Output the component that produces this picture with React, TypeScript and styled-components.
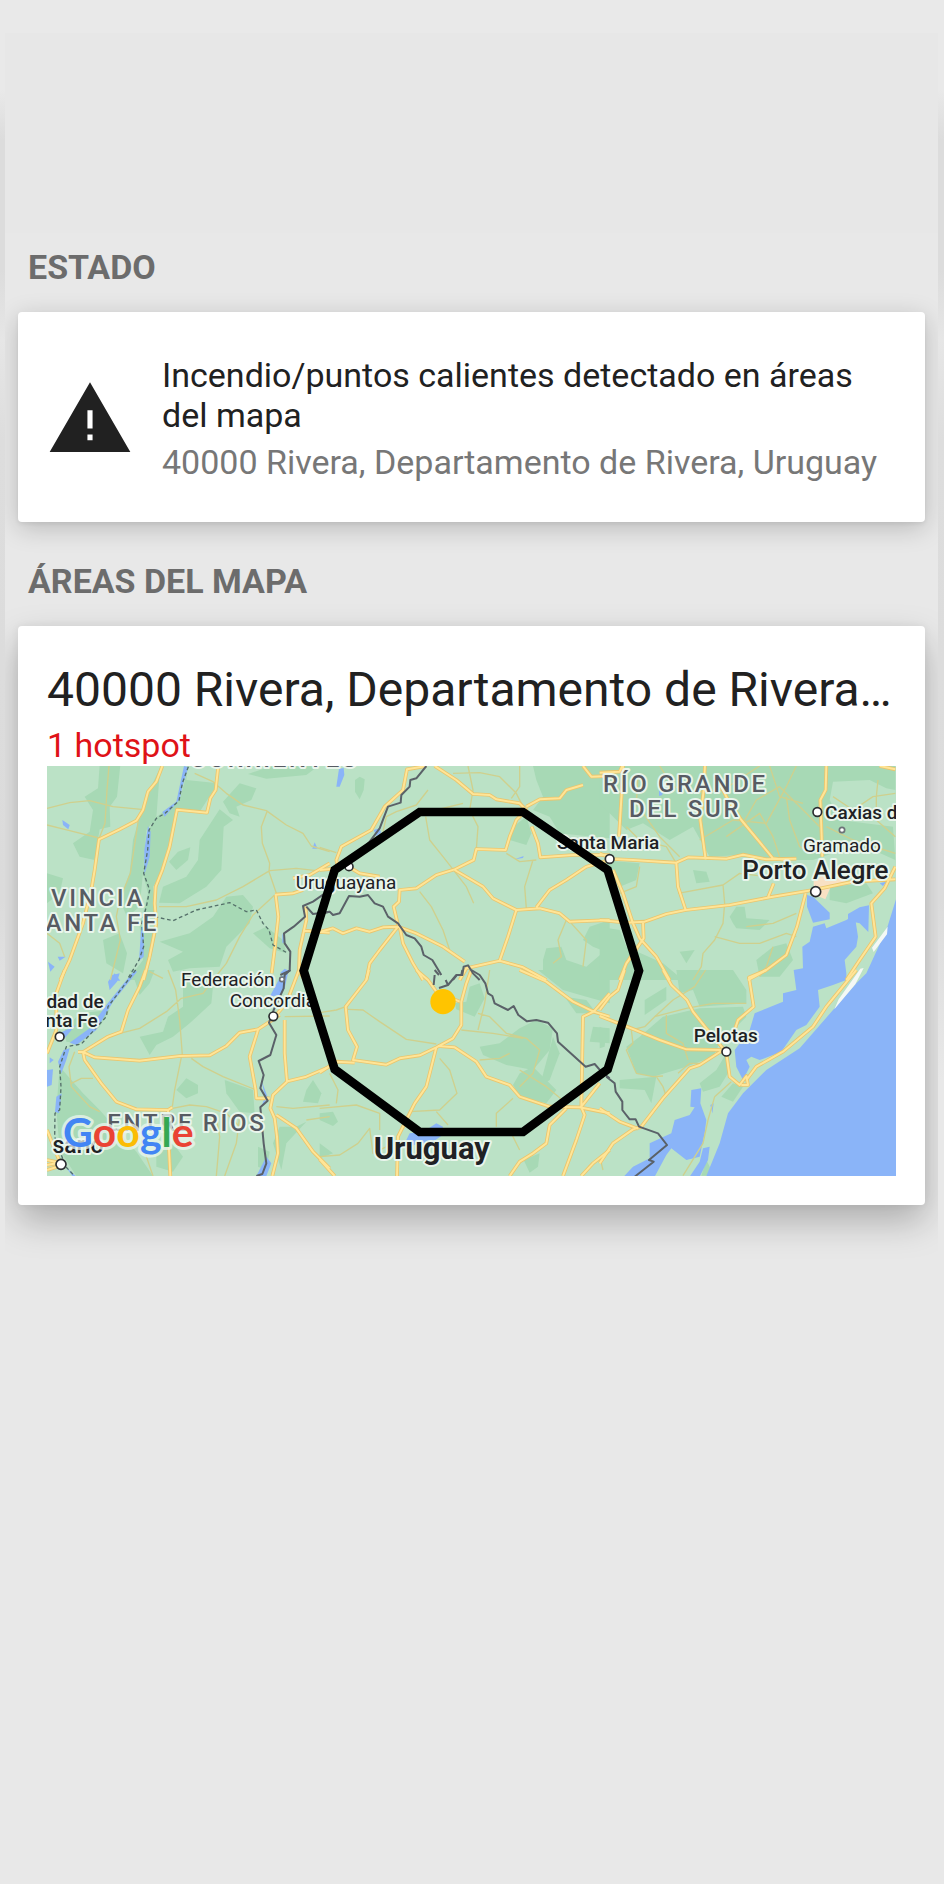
import React from 'react';
import styled, { createGlobalStyle } from 'styled-components';

const GlobalStyle = createGlobalStyle`
  * { box-sizing: border-box; }
  body {
    margin: 0;
    background: #e8e8e8;
    font-family: Roboto, "Liberation Sans", sans-serif;
  }
`;

const Page = styled.div`
  min-height: 100vh;
  padding: 33px 6px 0 5px;
  background:
    linear-gradient(#e9e9e9 90px, #dcdcdc 140px, #dcdcdc 270px, #e6e6e6 340px, #dddddd 440px, #dbdbdb 900px, #e8e8e8 1080px) left / 5px 100% no-repeat,
    linear-gradient(#e9e9e9 90px, #dcdcdc 140px, #dcdcdc 270px, #e6e6e6 340px, #dddddd 440px, #dbdbdb 900px, #e8e8e8 1080px) right / 6px 100% no-repeat,
    linear-gradient(#e9e9e9 33px, #e8e8e8 33px);
`;

const Panel = styled.main`
  overflow: hidden;
  min-height: calc(100vh - 33px);
  padding-bottom: 64px;
  background: #e8e8e8;
`;

const TopSpace = styled.div`
  height: 200px;
  background: #e7e7e7;
`;

const Section = styled.section<{ $spaced?: boolean }>`
  padding: ${(p) => (p.$spaced ? 39 : 14)}px 13px 0;
`;

const SectionTitle = styled.h2`
  margin: 0 0 25px;
  padding-left: 10px;
  font-size: 34px;
  line-height: 40px;
  font-weight: 700;
  color: #6c6c6c;
  text-transform: uppercase;
`;

const Card = styled.article<{ $raised?: boolean }>`
  border-radius: 4px;
  background: #fff;
  box-shadow: ${(p) =>
    p.$raised
      ? '0 16px 36px rgba(0, 0, 0, 0.26), 0 0 8px rgba(0, 0, 0, 0.06)'
      : '0 6px 26px rgba(0, 0, 0, 0.2), 0 2px 4px rgba(0, 0, 0, 0.06)'};
`;

const StatusCard = styled(Card)`
  display: flex;
  align-items: center;
  gap: 28px;
  padding: 43px 28px 40px;
`;

const WarningIcon = styled.svg`
  flex: none;
  width: 88px;
  height: 88px;
`;

const StatusText = styled.div`
  min-width: 0;
  font-size: 34px;
  line-height: 40px;
`;

const StatusTitle = styled.p`
  margin: 0 0 7px;
  color: #212121;
`;

const StatusPlace = styled.p`
  margin: 0;
  color: #777;
`;

const AreaCard = styled(Card)`
  padding: 36px 29px 29px;
`;

const AreaName = styled.h3`
  margin: 0;
  overflow: hidden;
  font-size: 48px;
  line-height: 56px;
  font-weight: 400;
  color: #212121;
  white-space: nowrap;
  text-overflow: ellipsis;
`;

const HotspotCount = styled.p`
  margin: 7px 0 1px;
  font-size: 34px;
  line-height: 40px;
  color: #df1218;
`;

const MapSvg = styled.svg`
  display: block;
  width: 100%;
  height: auto;
  background: #bbe2c6;
`;

const Label = styled.text<{ $size?: number; $weight?: number; $region?: boolean }>`
  font-size: ${(p) => p.$size ?? 57}px;
  font-weight: ${(p) => p.$weight ?? 500};
  fill: ${(p) => (p.$region ? '#575b63' : '#202124')};
  letter-spacing: ${(p) => (p.$region ? 8 : 0)}px;
  stroke: #e9f5ec;
  stroke-width: 12px;
  stroke-linejoin: round;
  paint-order: stroke;
`;

const Logo = styled.text`
  font-family: Lato, Roboto, sans-serif;
  font-size: 123px;
  font-weight: 700;
  stroke: rgba(235, 246, 238, 0.75);
  stroke-width: 18px;
  stroke-linejoin: round;
  paint-order: stroke;
`;

interface Tile {
  x: number;
  y: number;
  land: string[];
  water: string[];
  minor: string[];
  major: string[];
  border: string[];
  province?: string[];
}

const tiles: Tile[] = [
  {
    x: -22,
    y: -18,
    land: [
      'M180 15L242 15L232 110L210 140L212 200L180 208L165 300L120 290L100 250L150 215L160 150L135 110L175 85Z',
      'M362 15L448 15L420 120L345 175L322 220L310 340L325 400L300 500L310 600L265 660L318 660L350 520L340 380L372 330L395 240L410 150L480 155L535 70L440 60L445 15L365 15L330 90L300 170L280 240L270 340L240 420L262 470L300 440L310 340L320 210L350 172Z',
      'M540 148L580 180L552 200L545 330L500 380L420 430L358 428L370 380L440 350L475 300L480 240Z',
      'M388 305L415 275L452 262L445 300L410 330Z',
      'M550 125L600 70L650 85L635 120L590 140L600 170L570 160Z',
      'M625 42L690 20L840 15L800 45L680 56Z',
      'M360 545L450 520L520 470L560 410L610 405L640 440L630 490L560 560L540 620L450 625L400 635L385 600L430 575Z',
      'M640 520L680 500L730 540L740 580L690 565Z',
      'M190 540L240 520L262 580L250 640L200 610Z',
      'M22 340L70 355L60 400L22 430Z',
    ],
    water: [
      'M433 18L446 22L428 80L420 118L375 170L368 156L410 125Z',
      'M325 198L333 215L330 290L314 345L314 270Z',
      'M68 180L90 195L86 208L70 195Z',
      'M818 266L825 247L834 266Z',
      'M305 500L313 505L312 590L298 602Z',
      'M25 605L45 620L32 635Z',
      'M54 590L78 590L60 602Z',
      'M210 662L225 640L242 662Z',
      'M728 520L742 560L736 545L728 550Z',
      'M722 638L735 626L748 632L742 645Z',
    ],
    minor: [
      'M22 145L90 128L150 122L220 140L305 148',
      'M208 18L202 90L196 190L178 236',
      'M22 195L90 212L178 234',
      'M296 180L284 260L272 340L240 420L230 470L242 540L212 660',
      'M465 40L520 65L560 100L610 135L680 152L740 195L790 220L815 258L870 275',
      'M683 152L665 200L668 250L690 310L688 335L710 400',
      'M358 440L440 440L530 420L610 380L690 332L770 325L830 332',
      'M705 405L640 465L600 530L560 610L520 660',
      'M22 520L60 550L75 590',
      'M330 635L370 655',
    ],
    major: [
      'M368 18L350 65L325 95L310 150L290 182L240 208L178 238L165 330L155 390L130 490L90 600L62 660',
      'M536 18L528 90L512 115L502 158L412 149L390 260L368 330L348 380L345 430L350 490L330 590L312 660',
      'M870 310L810 345L760 355',
      'M706 404L760 400L790 390',
      'M708 405L716 470L706 560L696 640',
      'M798 440L800 480L780 570L778 630L795 660',
      'M795 512L870 518',
    ],
    border: [
      'M870 390L820 425L790 438L796 470L762 500L733 520L735 550L752 575L750 632L722 645',
      'M800 440L820 462L870 455',
    ],
    province: [
      'M446 20L428 70L418 122L376 160L350 175L328 210L324 270L312 340L330 390L320 440L306 490L312 560L298 600L265 655',
      'M345 470L400 482L470 450L570 428L620 455L650 450L670 490L688 510L700 555L745 580',
    ],
  },
  {
    x: -22,
    y: 612,
    land: [
      'M270 0L345 0L330 40L300 75L285 30Z',
      'M430 0L522 30L515 100L450 160L400 200L350 225L330 255L300 200L370 185L385 140L430 110Z',
      'M75 180L120 130L210 120L180 170L120 220L80 215Z',
      'M60 290L130 370L180 420L290 545L340 618L110 618L60 540L50 420Z',
      'M440 325L475 345L475 370L440 385L410 360Z',
      'M555 330L640 360L645 430L600 425L560 370Z',
      'M820 330L845 370L835 400L790 395L800 360Z',
      'M350 540L400 520L430 560L400 605L350 590Z',
      'M655 530L690 545L680 600L655 590Z',
      'M700 520L720 470L770 470L800 455L740 520L725 600Z',
    ],
    water: [
      'M218 15L240 10L232 35L210 60L205 35Z',
      'M285 0L292 5L220 95L170 180L110 225L90 218L150 175L200 105Z',
      'M72 240L90 235L80 270L65 310L55 275Z',
      'M22 300L40 298L36 345L22 350Z',
      'M50 380L66 370L58 430L46 425Z',
      'M30 262L42 270L30 280Z',
      'M60 190L110 165L100 175L75 205Z',
      'M78 590L108 618L98 618Z',
      'M722 20L745 10L735 55L722 75L690 80Z',
      'M665 330L685 385L665 410L676 380Z',
      'M680 560L695 580L680 618L650 618Z',
    ],
    minor: [
      'M385 0L408 60L420 150L428 255',
      'M240 190L300 175L380 125L425 85L490 70L520 30',
      'M425 262L405 360L398 410',
      'M455 265L490 290L550 320L650 360',
      'M105 245L88 290L95 350L150 410L180 425',
      'M95 340L125 325L160 325',
      'M398 415L450 405L500 410L560 430L600 470',
      'M530 445L540 500L530 618',
      'M710 410L760 415L870 405',
      'M870 440L800 450',
      'M735 140L870 138',
      'M300 500L340 618',
      'M600 440L590 520L555 618',
    ],
    major: [
      'M318 0L300 50L265 120L245 185L205 200L130 246L165 262L300 272L420 258L510 256L560 228L600 188L655 178L690 155L720 135',
      'M130 246L135 270L185 340L230 395L290 418L385 420L398 412',
      'M385 420L386 500L392 618',
      'M115 246L132 246',
      'M735 150L735 250L742 335L700 375L692 415L705 445L712 500L715 550L698 618',
      'M744 334L800 320L870 290',
      'M710 435L770 475L820 545L870 595',
      'M655 180L630 260L648 360L650 385L690 385',
      'M778 0L740 100L705 140',
      'M75 0L50 70L50 180L22 250',
      'M22 570L60 578L22 585M22 600L60 588M22 480L60 575',
    ],
    border: [
      'M752 0L735 15L732 55L702 120L688 158L710 195L692 255L657 273L672 315L662 355L684 392L662 412L672 520L680 580L668 612L650 618',
    ],
    province: ['M288 0L205 110L200 140L125 222L80 230L60 290L64 350L60 420L46 430L45 500L78 590L105 618'],
  },
  {
    x: 818,
    y: -18,
    land: [
      'M640 18L870 18L870 235L820 230L720 220L690 170L640 150L670 110L650 60Z',
      'M106 60L120 50L135 58L132 90L120 118L106 95Z',
      'M580 200L620 170L635 220L620 255L570 240Z',
      'M670 600L680 565L725 560L740 600L800 620L870 560L870 660L700 660L670 640Z',
      'M810 500L870 480L870 580L820 560L790 540Z',
    ],
    water: ['M58 26L72 24L74 45L60 80L50 80Z', 'M162 210L180 205L184 218L170 228Z', 'M585 298L612 288L610 294Z'],
    minor: [
      'M445 18L460 90L450 150L475 200L470 268',
      'M325 90L290 135L230 155L200 170L190 215',
      'M318 170L330 240L370 290L400 328',
      'M405 335L440 380L462 430',
      'M300 395L335 440L370 510L390 570',
      'M400 40L480 38L540 50L590 100L610 140',
      'M640 300L615 380L620 445',
      'M0 262L50 278',
      'M740 480L715 540L725 590L700 610',
      'M755 490L800 540L790 620',
      'M430 130L350 150L330 165',
      'M600 18L600 80L575 115',
      'M560 280L600 305L650 300',
    ],
    major: [
      'M320 18L262 28L250 90L195 140L155 210L65 260L50 300L55 325L0 330',
      'M345 18L410 60L460 102L510 105L530 118L600 130L620 150L590 180L570 230L558 270L470 267L462 300L405 328L350 345L290 385L240 390L238 425L222 440L235 495',
      'M90 322L120 340L180 350',
      'M620 140L660 118L720 115L740 90L790 75M790 18L815 50L870 48',
      'M405 330L490 380L520 415L590 450L660 445L720 460L750 485L870 480',
      'M636 200L655 250L662 292L760 285L870 285',
      'M650 442L690 390L740 360L800 320L870 300',
      'M590 450L565 530L540 602L440 625L420 660',
      'M540 602L610 622L680 660',
      'M0 516L40 505L70 520L110 505L150 515L190 502L235 500L290 520L370 560L435 605',
      'M235 500L180 570L150 610L140 660M240 500L250 550L280 610L310 660',
    ],
    border: [
      'M320 18L290 55L272 60L270 80L245 105L243 128L205 140L180 205L150 245L80 320',
      'M0 462L30 455L40 465L60 460L88 408L120 410L145 405L165 430L190 440L205 470L235 490L260 525L285 535L305 560L312 585L338 600L365 645',
      'M400 660L412 645L428 645L432 620L445 616L460 640L480 660',
    ],
  },
  {
    x: 818,
    y: 612,
    land: [
      'M655 0L870 0L870 100L800 80L730 60Z',
      'M450 50L480 40L495 85L465 140L410 118L405 100L440 95Z',
      'M480 230L540 220L600 175L650 150L700 175L690 240L640 300L560 285L490 255Z',
      'M735 80L800 90L830 130L770 130Z',
      'M600 310L640 290L710 360L680 400L600 380L580 345Z',
      'M820 170L870 175L870 220L810 215Z',
      'M0 430L40 425L55 455L40 468L0 450Z',
      'M612 570L660 550L655 590L630 608Z',
      'M0 520L40 550L0 565Z',
      'M700 200L720 250L690 330L660 350Z',
    ],
    water: ['M310 486L350 460L370 470L365 498L340 515L250 530L270 490Z', 'M155 545L185 548L175 556Z'],
    minor: [
      'M0 128L50 120L78 110',
      'M85 118L130 120L180 155L260 208L350 222',
      'M360 265L390 300L412 370L360 420L270 425',
      'M510 0L495 100L475 180',
      'M475 130L510 140L560 190L620 205L660 240L640 310L600 350',
      'M425 180L520 190L610 205',
      'M580 385L530 430L530 470',
      'M0 415L110 405L180 430L180 480M115 520L150 475L160 550L220 520M115 520L60 555L0 560',
      'M30 310L55 360L50 400',
      'M600 300L680 350L740 400',
      'M480 270L540 265L570 250',
      'M350 425L385 465',
      'M575 490L600 540',
    ],
    major: [
      'M148 0L140 30L78 110L85 180L112 230L100 270L200 284L240 265L300 256L350 232L400 205L425 165L425 95L440 40L455 0',
      'M0 308L50 275L105 278',
      'M290 0L325 30L350 65L420 95',
      'M355 228L405 232L470 275L500 320L570 345L600 380L690 410L780 412L870 430',
      'M350 232L320 350L285 400L235 500L232 618',
      'M600 0L680 35L760 95L822 125L870 140M870 70L822 125L790 140L785 410L840 340',
      'M740 415L690 465L680 520L640 550L600 575L570 618',
      'M785 412L795 435L770 510L730 618',
      'M870 540L820 580L785 618',
      'M0 568L45 618',
    ],
    border: [
      'M342 45L345 15M358 15L345 0M358 54L385 45L410 15L425 15L428 0M385 45L378 30',
      'M455 0L480 15L497 40L505 70L518 78L525 100L565 120L582 108L596 135L622 154L650 150L685 158L712 190L715 215L798 290L825 282L845 305L870 325',
    ],
  },
  {
    x: 1658,
    y: -18,
    land: [
      'M0 18L887 18L887 90L860 85L810 60L700 65L690 120L720 180L880 200L887 300L820 270L700 280L640 300L500 300L420 285L330 290L280 200L210 240L130 190L80 210L0 130Z',
      'M0 300L120 310L110 360L60 380L30 340Z',
      'M390 470L410 440L435 440L440 475L510 480L480 510L410 505L400 490Z',
      'M240 575L285 570L260 610Z',
      'M280 330L320 335L330 365L290 370Z',
      'M0 500L60 510L80 560L190 610L250 660L0 660Z',
      'M470 600L520 560L560 550L580 600L540 650L480 650Z',
      'M690 380L800 370L820 400L740 430L690 420Z',
    ],
    water: [
      'M622 405L640 410L690 458L690 478L640 488L622 440Z',
      'M745 462L780 442L808 436L806 516L780 490L745 482Z',
      'M840 370L860 365L850 378Z',
      'M178 80L190 78L188 105L178 108Z',
    ],
    minor: [
      'M115 50L110 130L180 230L240 290',
      'M180 18L220 80L300 95L370 90L480 18',
      'M300 240L400 180L500 190L560 80L590 18',
      'M430 190L470 120L540 80L620 160L660 200',
      'M560 110L570 180L600 260L640 280',
      'M380 230L480 160L520 230L540 290',
      'M700 110L760 150L820 110L887 100',
      'M835 60L830 110L830 180L887 230',
      'M235 400L370 375L375 430L370 490L345 540L310 580L305 620L280 660',
      'M345 530L420 550L480 550L560 520L590 530',
      'M120 320L110 380L60 400',
      'M520 560L500 620L480 650',
      'M680 200L760 240L887 280',
      'M510 18L540 110L610 130',
      'M230 310L200 260L120 240L80 200',
      'M440 500L520 490L590 460',
      'M370 375L420 340L500 350L560 320',
    ],
    major: [
      'M70 18L66 100L58 230',
      'M316 18L312 90L302 180L318 298M350 50L380 110L425 180L520 295L560 300',
      'M680 18L678 90L662 120L665 200L668 290',
      'M0 280L40 297L100 300L180 305L230 308L265 292L380 296L430 284L500 298L590 296',
      'M230 308L235 380L258 450',
      'M0 480L80 488L135 485L200 462L258 450L390 435L520 410L640 390L760 365L887 358',
      'M505 412L522 370M555 315L590 330',
      'M40 330L70 400L100 490L120 535L170 590L210 660M130 485L132 535L80 610L60 660',
      'M618 400L592 500L560 585L500 630L445 660',
      'M887 320L855 385L815 430L828 530L780 600L740 660',
      'M0 38L60 35L68 18M840 18L887 28',
    ],
    border: [],
  },
  {
    x: 1658,
    y: 612,
    land: [
      'M230 0L400 0L440 60L440 100L300 110L280 60L240 70Z',
      'M80 230L120 200L190 140L300 115L430 110L440 140L360 220L340 260L260 290L160 320L110 310Z',
      'M135 90L200 50L200 90L135 135Z',
      'M300 340L350 300L380 250L385 310L360 350L310 365Z',
      'M365 380L400 340L430 350L400 395Z',
      'M60 330L170 320L155 400L135 360L60 355Z',
      'M0 170L20 180L15 230L0 235Z',
      'M320 570L335 600L320 617L305 617Z',
    ],
    water: [
      'M275 360L305 355L302 400L320 450L315 490L300 560L260 570L215 535L200 555L165 620L72 620L100 590L150 565L150 520L215 490L225 450L270 435L285 412L272 410Z',
      'M310 535L330 530L325 570L300 620L270 620L300 575Z',
      'M332 405L342 400L338 430Z',
    ],
    minor: [
      'M318 0L285 50L220 90L165 140L135 170L95 180L100 220L80 240L110 310L160 320L190 318',
      'M165 140L260 115L340 100L440 100M200 130L200 190L250 220L265 270M235 310L270 280L300 280',
      'M395 335L345 380L325 450L310 520L250 617',
      'M170 320L190 350L200 380',
      'M10 600L0 560',
    ],
    major: [
      'M75 0L55 60L30 80L0 120',
      'M190 0L215 45L262 90L280 125L320 175L370 235',
      'M500 0L448 22L462 110L415 150L405 180',
      'M0 138L95 175L180 210L260 238L370 240L300 285L270 295L190 385L125 470L100 478L40 520L0 580M0 415L60 455L115 476',
      'M380 250L390 320L420 345L440 318L445 345L425 345M440 330L470 290L550 245L640 170L680 110L770 0',
    ],
    border: ['M20 320L45 340L48 365L68 395L68 420L90 448L108 448L118 470L175 490L202 525L148 570L162 575L105 620'],
  },
];

const oceanPath =
  'M2547 400L2520 487L2458 622L2428 652L2358 732L2258 847L2158 912L2088 982L2043 1042L2018 1132L1978 1230L2547 1230Z';
const lagoonPath =
  'M2298 482L2333 472L2338 487L2398 462L2423 447L2433 512L2428 542L2393 582L2398 622L2398 642L2358 657L2313 672L2318 722L2278 777L2248 792L2203 857L2178 867L2138 882L2113 872L2098 882L2108 902L2088 942L2068 902L2063 852L2108 792L2123 742L2208 707L2208 682L2248 672L2240 612L2268 607L2266 542L2288 527Z';
const beachPath = 'M2522 482L2520 505L2480 558L2475 545ZM2440 608L2450 606L2425 655L2362 730L2375 700Z';

const Strokes = ({ layer, color, width, dash }: { layer: 'minor' | 'major' | 'border' | 'province'; color: string; width: number; dash?: string }) => (
  <g fill="none" stroke={color} strokeWidth={width} strokeDasharray={dash} strokeLinejoin="round">
    {tiles.map((t) => (
      <path key={`${t.x},${t.y}`} transform={`translate(${t.x} ${t.y})`} d={(t[layer] ?? []).join('')} />
    ))}
  </g>
);

const Fills = ({ layer, color }: { layer: 'land' | 'water'; color: string }) => (
  <g fill={color}>
    {tiles.map((t) =>
      t[layer].map((d) => <path key={d} transform={`translate(${t.x} ${t.y})`} d={d} />),
    )}
  </g>
);

const towns = [
  { x: 38, y: 812, r: 13 },
  { x: 679, y: 751, r: 13 },
  { x: 705, y: 640, r: 7 },
  { x: 42, y: 1195, r: 15 },
  { x: 906, y: 302, r: 12 },
  { x: 1688, y: 279, r: 13 },
  { x: 2306, y: 377, r: 15 },
  { x: 2311, y: 138, r: 13 },
  { x: 2385, y: 192, r: 8 },
  { x: 2038, y: 857, r: 13 },
];

const AreaMap = () => (
  <MapSvg viewBox="0 0 2547 1230" role="img" aria-label="Mapa de Rivera, Uruguay">
    <Fills layer="land" color="#a7d9b5" />
    <path d={oceanPath} fill="#8ab4f8" />
    <path d={lagoonPath} fill="#8ab4f8" />
    <Fills layer="water" color="#8ab4f8" />
    <path d={beachPath} fill="#f4f8f5" />
    <path d="M2300 330L2340 320L2400 345L2350 365L2335 400L2300 385Z" fill="#f8e1c4" />
    <Strokes layer="minor" color="#cfd08d" width={4} />
    <Strokes layer="major" color="#eac56d" width={11} />
    <Strokes layer="major" color="#ffe597" width={6} />
    <Strokes layer="province" color="#55706a" width={4} dash="11 8" />
    <Strokes layer="border" color="#5a6168" width={6} />

    {towns.map((t) => (
      <circle key={`${t.x},${t.y}`} cx={t.x} cy={t.y} r={t.r} fill="#fff" stroke={t.r < 10 ? '#6d7378' : '#2b2d30'} strokeWidth={5} />
    ))}

    <Label x="683" y="3" $size={72} $region textAnchor="middle">CORRIENTES</Label>
    <Label x="294" y="420" $size={72} $region textAnchor="end">VINCIA</Label>
    <Label x="336" y="494" $size={72} $region textAnchor="end">ANTA FE</Label>
    <Label x="181" y="1094" $size={72} $region>ENTRE RÍOS</Label>
    <Label x="1668" y="79" $size={72} $region>RÍO GRANDE</Label>
    <Label x="1746" y="152" $size={72} $region>DEL SUR</Label>
    <Label x="170" y="725" textAnchor="end">dad de</Label>
    <Label x="152" y="782" textAnchor="end">nta Fe</Label>
    <Label x="402" y="660" $weight={400}>Federación</Label>
    <Label x="548" y="722" $weight={400}>Concordia</Label>
    <Label x="170" y="1160" $size={69} textAnchor="end">sario</Label>
    <Label x="746" y="370" $weight={400}>Uruguayana</Label>
    <Label x="1530" y="248">Santa Maria</Label>
    <Label x="2334" y="158">Caxias do Sul</Label>
    <Label x="2268" y="258" $weight={400}>Gramado</Label>
    <Label x="2086" y="340" $size={78}>Porto Alegre</Label>
    <Label x="1940" y="827">Pelotas</Label>
    <Label x="980" y="1180" $size={93} $weight={700}>Uruguay</Label>

    <polygon
      points="1118,138 1428,138 1682,312 1776,614 1682,910 1428,1098 1118,1098 863,910 770,614 863,312"
      fill="none"
      stroke="#000"
      strokeWidth="26"
    />
    <circle cx="1188" cy="707" r="38" fill="#ffc400" />

    <Logo x="48" y="1142">
      <tspan fill="#4285f4">G</tspan>
      <tspan fill="#ea4335">o</tspan>
      <tspan fill="#fbbc05">o</tspan>
      <tspan fill="#4285f4">g</tspan>
      <tspan fill="#34a853">l</tspan>
      <tspan fill="#ea4335">e</tspan>
    </Logo>
  </MapSvg>
);

export default function App() {
  return (
    <>
      <GlobalStyle />
      <Page>
        <Panel>
          <TopSpace />
          <Section>
            <SectionTitle>Estado</SectionTitle>
            <StatusCard>
              <WarningIcon viewBox="0 0 24 24" aria-hidden="true">
                <path fill="#212121" d="M1 21h22L12 2 1 21zm11.7-3.2h-1.4v-1.6h1.4v1.6zm0-3.2h-1.4v-5h1.4v5z" />
              </WarningIcon>
              <StatusText>
                <StatusTitle>Incendio/puntos calientes detectado en áreas del mapa</StatusTitle>
                <StatusPlace>40000 Rivera, Departamento de Rivera, Uruguay</StatusPlace>
              </StatusText>
            </StatusCard>
          </Section>
          <Section $spaced>
            <SectionTitle>Áreas del mapa</SectionTitle>
            <AreaCard $raised>
              <AreaName>40000 Rivera, Departamento de Rivera, Uruguay</AreaName>
              <HotspotCount>1 hotspot</HotspotCount>
              <AreaMap />
            </AreaCard>
          </Section>
        </Panel>
      </Page>
    </>
  );
}
